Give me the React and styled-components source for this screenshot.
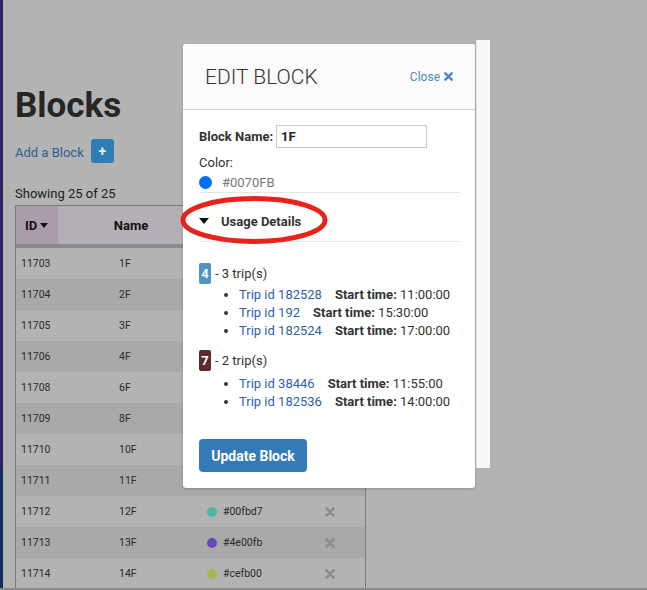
import styled, { createGlobalStyle } from "styled-components";

const GlobalStyle = createGlobalStyle`
  html, body {
    margin: 0;
    padding: 0;
    background: #b3b3b3;
    font-family: Roboto, "Liberation Sans", sans-serif;
    color: #222;
  }
  * { box-sizing: border-box; }
`;

const rows = [
  { id: 11703, name: "1F", color: "#0070fb" },
  { id: 11704, name: "2F", color: "#fb0000" },
  { id: 11705, name: "3F", color: "#00fb2e" },
  { id: 11706, name: "4F", color: "#fb8b00" },
  { id: 11708, name: "6F", color: "#b000fb" },
  { id: 11709, name: "8F", color: "#00c8fb" },
  { id: 11710, name: "10F", color: "#fb00a4" },
  { id: 11711, name: "11F", color: "#7bfb00" },
  { id: 11712, name: "12F", color: "#00fbd7" },
  { id: 11713, name: "13F", color: "#4e00fb" },
  { id: 11714, name: "14F", color: "#cefb00" },
];

const usage = [
  {
    route: "4",
    badge: "#4f94c4",
    trips: [
      { id: "182528", start: "11:00:00" },
      { id: "192", start: "15:30:00" },
      { id: "182524", start: "17:00:00" },
    ],
  },
  {
    route: "7",
    badge: "#5c2b2e",
    trips: [
      { id: "38446", start: "11:55:00" },
      { id: "182536", start: "14:00:00" },
    ],
  },
];

function XIcon({ size = 10, color = "#8c8c8c" }) {
  return (
    <svg width={size} height={size} viewBox="0 0 10 10">
      <path d="M1.5 1.5 L8.5 8.5 M8.5 1.5 L1.5 8.5" stroke={color} strokeWidth="2.6" strokeLinecap="round" />
    </svg>
  );
}

function App() {
  return (
    <>
      <GlobalStyle />
      <Screen>
        <Sidebar />
        <Main>
          <Title>Blocks</Title>
          <AddRow>
            <AddLink>Add a Block</AddLink>
            <PlusButton>+</PlusButton>
          </AddRow>
          <Showing>Showing 25 of 25</Showing>
          <Table>
            <HeadRow>
              <HeadCell $active>
                ID <SortCaret />
              </HeadCell>
              <HeadCell $center>Name</HeadCell>
              <HeadCell $center>Color</HeadCell>
              <HeadCell />
            </HeadRow>
            {rows.map((r, i) => (
              <Row key={r.id} $alt={i % 2 === 1}>
                <Cell>{r.id}</Cell>
                <Cell $pad={61}>{r.name}</Cell>
                <Cell $pad={3}>
                  <Dot $color={r.color} />
                  {r.color}
                </Cell>
                <Cell $pad={25}>
                  <XIcon />
                </Cell>
              </Row>
            ))}
          </Table>
        </Main>

        <ScrollTrack />

        <Modal>
          <ModalHeader>
            <ModalTitle>EDIT BLOCK</ModalTitle>
            <CloseLink>
              Close <XIcon size={9} color="#4a86c0" />
            </CloseLink>
          </ModalHeader>
          <ModalBody>
            <FieldRow>
              <Label>Block Name:</Label>
              <NameInput defaultValue="1F" />
            </FieldRow>
            <ColorLabel>Color:</ColorLabel>
            <SwatchRow>
              <Swatch />
              <SwatchText>#0070FB</SwatchText>
            </SwatchRow>
            <UsageToggle>
              <ToggleCaret />
              Usage Details
            </UsageToggle>
            {usage.map((g, i) => (
              <Group key={g.route}>
                <GroupLine>
                  <RouteBadge $bg={g.badge}>{g.route}</RouteBadge>
                  <span>- {g.trips.length} trip(s)</span>
                </GroupLine>
                <TripList $top={i === 0 ? 2 : 4}>
                  {g.trips.map((t) => (
                    <Trip key={t.id}>
                      <TripLink>Trip id {t.id}</TripLink>
                      <StartLabel>Start time:</StartLabel> {t.start}
                    </Trip>
                  ))}
                </TripList>
              </Group>
            ))}
            <UpdateButton>Update Block</UpdateButton>
          </ModalBody>
        </Modal>

        <Annotation width="154" height="52" viewBox="0 0 154 52">
          <ellipse cx="76" cy="26" rx="71" ry="21.5" fill="none" stroke="#e8231c" strokeWidth="5" />
        </Annotation>
      </Screen>
    </>
  );
}

export default App;

const Screen = styled.div`
  position: relative;
  display: flex;
  height: 590px;
  overflow: hidden;
  border-bottom: 2px solid #8a8a8a;
`;

const Sidebar = styled.div`
  flex: 0 0 3px;
  background: linear-gradient(to bottom, #2b2462 0, #2b2462 468px, #0c2f5c 468px);
`;

const Main = styled.div`
  flex: 1;
  padding: 88px 0 0 12px;
`;

const Title = styled.h1`
  margin: 0;
  font-size: 35px;
  line-height: 35px;
  font-weight: 700;
  color: #262626;
`;

const AddRow = styled.div`
  display: flex;
  align-items: center;
  gap: 7px;
  margin-top: 16px;
`;

const AddLink = styled.span`
  font-size: 13px;
  padding-top: 2px;
  color: #2d5f92;
`;

const PlusButton = styled.span`
  display: flex;
  align-items: center;
  justify-content: center;
  width: 23px;
  height: 24px;
  border-radius: 3px;
  background: #2f7db5;
  color: #e6eef5;
  font-size: 14px;
  font-weight: 700;
`;

const Showing = styled.div`
  margin-top: 23px;
  font-size: 13px;
  line-height: 16px;
  color: #222;
`;

const Table = styled.div`
  width: 351px;
  margin-top: 3px;
  border: 1px solid #7a7a7a;
  border-bottom: none;
`;

const HeadRow = styled.div`
  display: grid;
  grid-template-columns: 42px 146px 96px 1fr;
  height: 42px;
  background: #b4afb6;
  border-bottom: 4px solid #8a8a8a;
`;

const HeadCell = styled.div`
  display: flex;
  align-items: center;
  justify-content: ${(p) => (p.$center ? "center" : "flex-start")};
  padding-left: ${(p) => (p.$center ? 0 : 9)}px;
  gap: 3px;
  font-size: 13px;
  font-weight: 700;
  color: #111;
  background: ${(p) => (p.$active ? "#aa9daa" : "transparent")};
`;

const SortCaret = styled.span`
  width: 0;
  height: 0;
  border-left: 4.5px solid transparent;
  border-right: 4.5px solid transparent;
  border-top: 5px solid #111;
`;

const Row = styled.div`
  display: grid;
  grid-template-columns: 42px 146px 96px 1fr;
  height: 31px;
  background: ${(p) => (p.$alt ? "#a9a9a9" : "#b3b3b3")};
`;

const Cell = styled.div`
  display: flex;
  align-items: center;
  gap: 6px;
  padding-left: ${(p) => p.$pad ?? 5}px;
  font-size: 10.5px;
  color: #2a2a2a;
`;

const Dot = styled.span`
  width: 10px;
  height: 10px;
  border-radius: 50%;
  background: color-mix(in srgb, ${(p) => p.$color} 45%, #838383);
`;

const ScrollTrack = styled.div`
  position: absolute;
  left: 476px;
  top: 40px;
  width: 14px;
  height: 428px;
  background: #f8f8f8;
  border-left: 1px solid #ececec;
`;

const Modal = styled.div`
  position: absolute;
  left: 183px;
  top: 44px;
  width: 292px;
  height: 444px;
  background: #fff;
  border-radius: 3px;
  box-shadow: 0 1px 3px rgba(0, 0, 0, 0.2);
  overflow: hidden;
`;

const ModalHeader = styled.div`
  display: flex;
  align-items: center;
  justify-content: space-between;
  height: 66px;
  padding: 0 22px;
  background: #fbfbfb;
  border-bottom: 1px solid #cfcfcf;
`;

const ModalTitle = styled.h2`
  margin: 0;
  font-size: 21px;
  font-weight: 300;
  color: #333;
`;

const CloseLink = styled.span`
  display: flex;
  align-items: center;
  gap: 4px;
  font-size: 12px;
  color: #4a86c0;
`;

const ModalBody = styled.div`
  padding: 15px 15px 0 16px;
  font-size: 13px;
  color: #333;
`;

const FieldRow = styled.div`
  display: flex;
  align-items: center;
  gap: 3px;
`;

const Label = styled.span`
  font-weight: 700;
`;

const NameInput = styled.input`
  width: 151px;
  height: 23px;
  padding: 0 4px;
  border: 1px solid #c8c8c8;
  font-family: inherit;
  font-size: 13px;
  font-weight: 700;
  color: #222;
  outline: none;
`;

const ColorLabel = styled.div`
  margin-top: 7px;
  line-height: 16px;
`;

const SwatchRow = styled.div`
  display: flex;
  align-items: center;
  gap: 10px;
  height: 22px;
  padding-top: 2px;
  border-bottom: 1px solid #e5e5e5;
`;

const Swatch = styled.span`
  width: 13px;
  height: 13px;
  border-radius: 50%;
  background: #0070fb;
`;

const SwatchText = styled.span`
  color: #777;
`;

const UsageToggle = styled.div`
  display: flex;
  align-items: center;
  gap: 12px;
  height: 49px;
  padding-top: 8px;
  font-weight: 700;
  border-bottom: 1px solid #e8e8e8;
`;

const ToggleCaret = styled.span`
  width: 0;
  height: 0;
  border-left: 5px solid transparent;
  border-right: 5px solid transparent;
  border-top: 6px solid #111;
`;

const Group = styled.div`
  margin-top: 21px;
  & + & {
    margin-top: 10px;
  }
`;

const GroupLine = styled.div`
  display: flex;
  align-items: center;
  gap: 4px;
  height: 21px;
`;

const RouteBadge = styled.span`
  display: flex;
  align-items: center;
  justify-content: center;
  width: 12px;
  height: 21px;
  border-radius: 2px;
  background: ${(p) => p.$bg};
  color: #fff;
  font-weight: 700;
`;

const TripList = styled.ul`
  list-style: none;
  margin: ${(p) => p.$top}px 0 0;
  padding: 0;
`;

const Trip = styled.li`
  position: relative;
  padding-left: 40px;
  line-height: 18px;
  &::before {
    content: "";
    position: absolute;
    left: 25px;
    top: 7px;
    width: 4px;
    height: 4px;
    border-radius: 50%;
    background: #333;
  }
`;

const TripLink = styled.span`
  color: #2f5fae;
  margin-right: 13px;
`;

const StartLabel = styled.strong`
  font-weight: 700;
`;

const UpdateButton = styled.button`
  margin-top: 28px;
  width: 108px;
  height: 33px;
  border: none;
  border-radius: 4px;
  background: #337ab7;
  color: #fff;
  font-family: inherit;
  font-size: 14px;
  font-weight: 700;
`;

const Annotation = styled.svg`
  position: absolute;
  left: 178px;
  top: 194px;
`;
